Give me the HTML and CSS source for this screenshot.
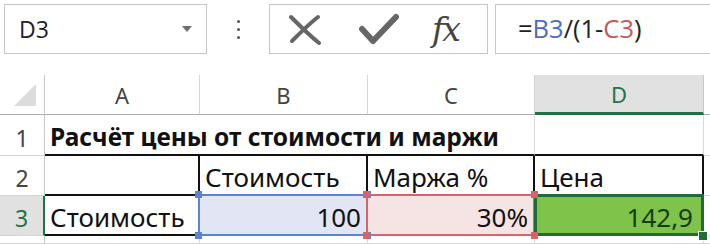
FILE: index.html
```html
<!DOCTYPE html>
<html lang="ru">
<head>
    <meta charset="UTF-8">
    <title>Расчёт цены</title>
    <link rel="stylesheet" href="styles.css">
</head>
<body>
    <div class="topbar">
        <div class="namebox">
            <span class="cellname">D3</span>
            <span class="arrow"></span>
        </div>
        <div class="dots"><i></i><i></i><i></i></div>
        <div class="fbuttons">
            <svg class="icon" width="36" height="32" viewBox="0 0 36 32">
                <path d="M4 4 C12 12 22 22 32 30" stroke="#666" stroke-width="4" fill="none" stroke-linecap="round"/>
                <path d="M31 4 C22 11 13 20 5 28" stroke="#666" stroke-width="4" fill="none" stroke-linecap="round"/>
            </svg>
            <svg class="icon" width="40" height="32" viewBox="0 0 40 32">
                <path d="M3 16 L14 28 L37 4" stroke="#666" stroke-width="6" fill="none" stroke-linecap="round" stroke-linejoin="round"/>
            </svg>
            <span class="fx">fx</span>
        </div>
        <div class="formula">=<span class="ref-b">B3</span>/(1-<span class="ref-c">C3</span>)</div>
    </div>

    <div class="sheet">
        <div class="corner"><span class="tri"></span></div>
        <div class="colhead">A</div>
        <div class="colhead">B</div>
        <div class="colhead">C</div>
        <div class="colhead active">D</div>
        <div class="colhead end"></div>

        <div class="rowhead">1</div>
        <div class="cell title topline">Расчёт цены от стоимости и маржи</div>
        <div class="cell topline"></div>
        <div class="cell end"></div>

        <div class="rowhead">2</div>
        <div class="cell boxed"></div>
        <div class="cell boxed">Стоимость</div>
        <div class="cell boxed">Маржа %</div>
        <div class="cell boxed">Цена</div>
        <div class="cell end"></div>

        <div class="rowhead active">3</div>
        <div class="cell boxed">Стоимость</div>
        <div class="cell boxed num sel blue">100<i class="h tl"></i><i class="h tr"></i><i class="h bl"></i><i class="h br"></i></div>
        <div class="cell boxed num sel red">30%<i class="h tl"></i><i class="h tr"></i><i class="h bl"></i><i class="h br"></i></div>
        <div class="cell boxed num sel green">142,9<i class="h fill"></i></div>
        <div class="cell end"></div>

        <div class="rowhead"></div>
        <div class="cell"></div>
        <div class="cell"></div>
        <div class="cell"></div>
        <div class="cell"></div>
        <div class="cell end"></div>
    </div>
</body>
</html>
```

FILE: styles.css
```css
body {
    margin: 0;
    width: 710px;
    height: 244px;
    overflow: hidden;
    background: #fff;
    font-family: "Open Sans", sans-serif;
}
.topbar {
    display: flex;
    align-items: flex-start;
    height: 75px;
    padding: 4px 0 0 4px;
    box-sizing: border-box;
}
.namebox {
    width: 203px;
    height: 50px;
    box-sizing: border-box;
    border: 1px solid #c6c6c6;
    display: flex;
    align-items: center;
    justify-content: space-between;
    padding: 0 14px 0 14px;
}
.cellname {
    font-size: 23px;
    color: #222;
}
.arrow {
    width: 0;
    height: 0;
    border-left: 5px solid transparent;
    border-right: 5px solid transparent;
    border-top: 6px solid #707070;
}
.dots {
    width: 62px;
    height: 50px;
    display: flex;
    flex-direction: column;
    align-items: center;
    justify-content: center;
    gap: 5px;
}
.dots i {
    width: 3px;
    height: 3px;
    border-radius: 50%;
    background: #555;
}
.fbuttons {
    width: 219px;
    height: 50px;
    box-sizing: border-box;
    border: 1px solid #c6c6c6;
    display: flex;
    align-items: center;
    padding: 0 0 0 17px;
    gap: 36px;
}
.fx {
    font-family: "DejaVu Serif", serif;
    font-style: italic;
    font-size: 33px;
    color: #444;
    letter-spacing: -2px;
    margin-left: -3px;
}
.formula {
    margin-left: 7px;
    flex: 1;
    height: 50px;
    box-sizing: border-box;
    border: 1px solid #c6c6c6;
    border-right: none;
    padding: 6px 0 0 22px;
    font-size: 25.5px;
    color: #222;
}
.ref-b { color: #4a6fc0; }
.ref-c { color: #c45a5a; }

.sheet {
    display: grid;
    grid-template-columns: 45px 155px 168px 167px 169px 1fr;
    grid-template-rows: 40px 41px 40px 40px 1fr;
    height: 169px;
    font-family: "Noto Sans", sans-serif;
}
.corner {
    border-right: 1px solid #c8c8c8;
    border-bottom: 1px solid #ababab;
    position: relative;
}
.tri {
    position: absolute;
    right: 8px;
    bottom: 8px;
    width: 0;
    height: 0;
    border-left: 22px solid transparent;
    border-bottom: 22px solid #dcdcdc;
}
.colhead {
    border-right: 1px solid #d4d4d4;
    border-bottom: 1px solid #ababab;
    display: flex;
    align-items: center;
    justify-content: center;
    font-size: 22px;
    color: #444;
    background: #fff;
}
.colhead.active {
    background: #e1e1e1;
    color: #217346;
    border-bottom: 3px solid #217346;
    border-right-color: #c8c8c8;
}
.colhead.end {
    border-right: none;
}
.rowhead {
    border-right: 1px solid #c8c8c8;
    border-bottom: 1px solid #d4d4d4;
    display: flex;
    align-items: flex-end;
    justify-content: center;
    padding-bottom: 1px;
    font-size: 23px;
    color: #444;
}
.rowhead.active {
    background: #e1e1e1;
    color: #217346;
    border-right: 2px solid #217346;
}
.cell {
    position: relative;
    border-right: 1px solid #dadada;
    border-bottom: 1px solid #dadada;
    display: flex;
    align-items: flex-end;
    padding: 0 5px 0 5px;
    font-size: 26px;
    line-height: 34px;
    color: #111;
    white-space: nowrap;
    box-sizing: border-box;
}
.cell.end {
    border-right: none;
}
.title {
    grid-column: span 3;
    font-weight: bold;
    font-size: 24.5px;
}
.topline {
    border-bottom: 2px solid #111;
}
.boxed {
    border-right: 2px solid #111;
    border-bottom: 2px solid #111;
}
.num {
    justify-content: flex-end;
}
.sel::before {
    content: "";
    position: absolute;
    left: -2px;
    right: -2px;
    top: -2px;
    bottom: -2px;
    border: 2px solid;
}
.blue { background: #e2e6f4; }
.blue::before { border-color: #5b85d3; }
.blue .h { background: #5b85d3; }
.red { background: #f6e4e4; }
.red::before { border-color: #d8636a; }
.red .h { background: #d8636a; }
.green {
    background: #7fc34a;
    color: #163d12;
    padding-right: 9px;
}
.green::before {
    border: 3px solid #1f6b3a;
    left: -1px;
    right: -2px;
    top: -2px;
    bottom: -2px;
}
.h {
    position: absolute;
    width: 7px;
    height: 7px;
    z-index: 2;
}
.tl { left: -5px; top: -5px; }
.tr { right: -5px; top: -5px; }
.bl { left: -5px; bottom: -5px; }
.br { right: -5px; bottom: -5px; }
.green .fill {
    background: #1f6b3a;
    right: -6px;
    bottom: -7px;
    width: 8px;
    height: 8px;
    border: 1px solid #fff;
}
```
